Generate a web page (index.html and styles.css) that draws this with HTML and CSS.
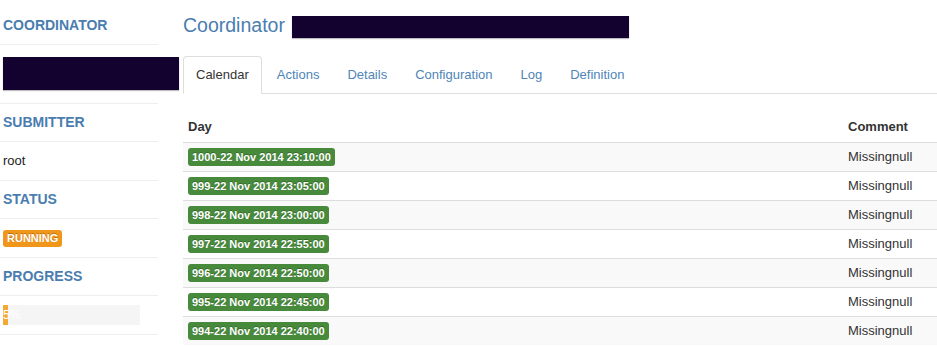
FILE: index.html
```html
<!DOCTYPE html>
<html lang="en">
<head>
    <meta charset="UTF-8">
    <meta name="viewport" content="width=device-width, initial-scale=1.0">
    <title>Coordinator</title>
    <link rel="stylesheet" href="styles.css">
</head>
<body>
    <div class="page">
        <div class="sidebar">
            <div class="side-item side-first"><h4>COORDINATOR</h4></div>
            <div class="side-item side-name"><span class="redacted name-redact"></span></div>
            <div class="side-item side-head"><h4>SUBMITTER</h4></div>
            <div class="side-item">root</div>
            <div class="side-item side-head"><h4>STATUS</h4></div>
            <div class="side-item"><span class="label label-warning">RUNNING</span></div>
            <div class="side-item side-head"><h4>PROGRESS</h4></div>
            <div class="side-item">
                <div class="progress">
                    <div class="progress-bar" style="width: 5px;">5%</div>
                </div>
            </div>
        </div>

        <div class="main">
            <h3 class="title">Coordinator <span class="redacted title-redact"></span></h3>

            <ul class="tabs">
                <li class="active"><a href="#">Calendar</a></li>
                <li><a href="#">Actions</a></li>
                <li><a href="#">Details</a></li>
                <li><a href="#">Configuration</a></li>
                <li><a href="#">Log</a></li>
                <li><a href="#">Definition</a></li>
            </ul>

            <div class="tab-content">
                <table class="calendar">
                    <thead>
                        <tr>
                            <th>Day</th>
                            <th class="comment">Comment</th>
                        </tr>
                    </thead>
                    <tbody>
                        <tr><td><span class="label label-success">1000-22 Nov 2014 23:10:00</span></td><td>Missingnull</td></tr>
                        <tr><td><span class="label label-success">999-22 Nov 2014 23:05:00</span></td><td>Missingnull</td></tr>
                        <tr><td><span class="label label-success">998-22 Nov 2014 23:00:00</span></td><td>Missingnull</td></tr>
                        <tr><td><span class="label label-success">997-22 Nov 2014 22:55:00</span></td><td>Missingnull</td></tr>
                        <tr><td><span class="label label-success">996-22 Nov 2014 22:50:00</span></td><td>Missingnull</td></tr>
                        <tr><td><span class="label label-success">995-22 Nov 2014 22:45:00</span></td><td>Missingnull</td></tr>
                        <tr><td><span class="label label-success">994-22 Nov 2014 22:40:00</span></td><td>Missingnull</td></tr>
                    </tbody>
                </table>
            </div>
        </div>
    </div>
</body>
</html>
```

FILE: styles.css
```css
body {
    margin: 0;
    font-family: "Liberation Sans", Arial, sans-serif;
    font-size: 13px;
    line-height: 20px;
    color: #333;
    background-color: #fff;
}

.page {
    display: flex;
    gap: 25px;
}

/* left column */
.sidebar {
    width: 158px;
    flex-shrink: 0;
    padding-top: 6px;
}

.side-item {
    padding: 9px 0 9px 3px;
    border-bottom: 1px solid #eee;
    color: #222;
}

.side-head {
    padding-top: 8px;
}

.side-name {
    padding: 12px 0 13px 3px;
}

.sidebar h4 {
    margin: 0;
    font-size: 14px;
    line-height: 20px;
    font-weight: bold;
    color: #4a7daf;
}

.redacted {
    display: inline-block;
    background-color: #13022f;
    box-shadow: 0 1px 1px rgba(0,0,0,0.25);
}

.name-redact {
    display: block;
    width: 176px;
    height: 33px;
}

.title-redact {
    width: 337px;
    height: 22px;
    vertical-align: -6px;
    margin-left: 2px;
}

.label {
    display: inline-block;
    padding: 0 4px;
    font-size: 11px;
    font-weight: bold;
    color: #fff;
    border-radius: 3px;
    text-shadow: 0 -1px 0 rgba(0,0,0,0.25);
}

.label-warning {
    background-color: #f0961b;
    line-height: 17px;
    padding: 0 4px;
}

.label-success {
    background-color: #478a3c;
    line-height: 18px;
    vertical-align: top;
}

.progress {
    width: 137px;
    height: 20px;
    background-color: #f5f5f5;
}

.progress-bar {
    height: 20px;
    background-color: #f4a934;
    color: #fff;
    font-size: 12px;
    line-height: 20px;
    white-space: nowrap;
}

/* right column */
.main {
    flex: 1;
}

.title {
    margin: 13px 0 18px;
    font-size: 19.5px;
    line-height: 24px;
    font-weight: normal;
    color: #4a7daf;
}

.tabs {
    display: flex;
    list-style: none;
    margin: 0;
    padding: 0;
    border-bottom: 1px solid #ddd;
}

.tabs li {
    margin-right: 2px;
    margin-bottom: -1px;
}

.tabs a {
    display: block;
    padding: 8px 12px;
    border: 1px solid transparent;
    border-radius: 4px 4px 0 0;
    color: #4f85b8;
    text-decoration: none;
}

.tabs .active a {
    color: #333;
    background-color: #fff;
    border-color: #ddd #ddd transparent;
}

.tab-content {
    padding-top: 23px;
}

.calendar {
    width: 100%;
    border-collapse: collapse;
}

.calendar th {
    padding: 0 5px 5px;
    text-align: left;
    font-weight: bold;
    border-bottom: 1px solid #ddd;
}

.calendar th.comment {
    width: 84px;
}

.calendar td {
    padding: 5px;
    line-height: 18px;
    border-top: 1px solid #ddd;
}

.calendar tbody tr:nth-child(odd) td {
    background-color: #f9f9f9;
}
```
